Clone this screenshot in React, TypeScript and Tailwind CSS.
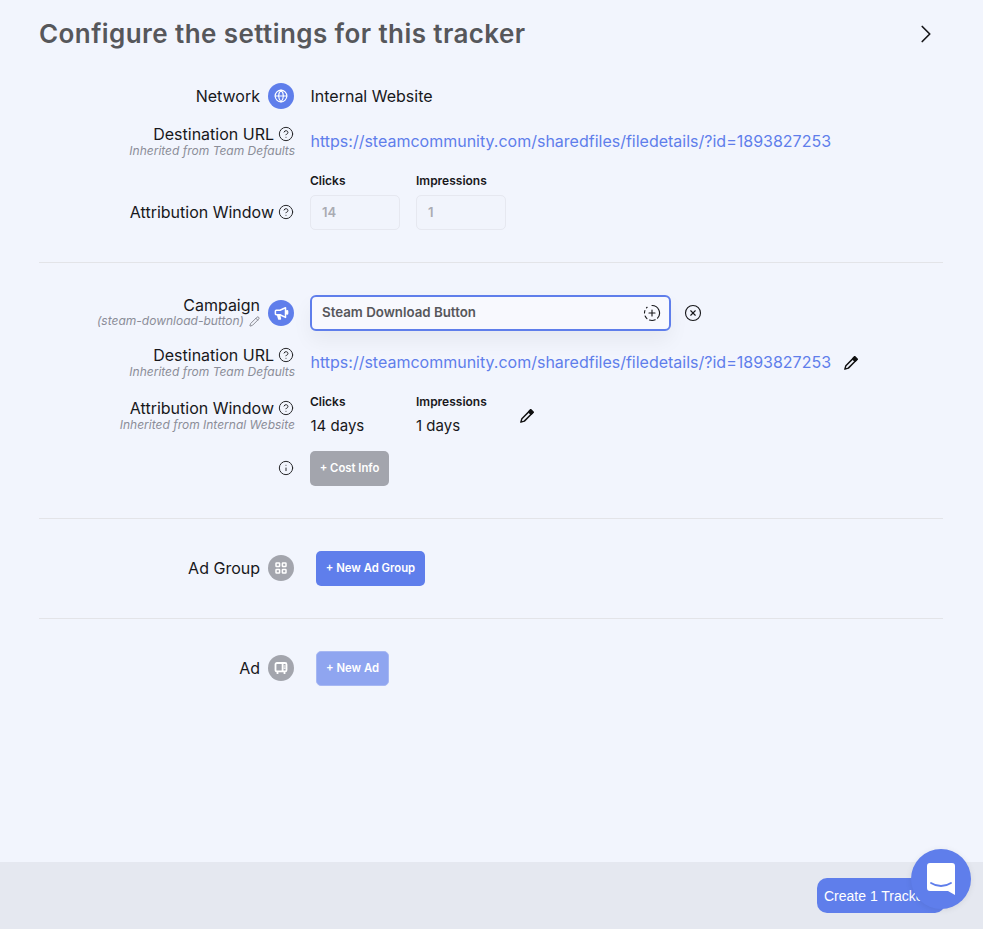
import React from "react";
import { ChevronRight, Globe, CircleHelp, Info, CircleX, CircleFadingPlus, Pencil } from "lucide-react";

const URL_TEXT = "https://steamcommunity.com/sharedfiles/filedetails/?id=1893827253";

function Help() {
  return <CircleHelp size={16} strokeWidth={1.5} className="ml-[4px] text-[#27272a] shrink-0" />;
}

function Sub({ children }: { children: React.ReactNode }) {
  return <div className="text-[12px] leading-[14px] italic text-[#8b8d98] whitespace-nowrap mr-[-1px]">{children}</div>;
}

function Badge({ active, children }: { active?: boolean; children: React.ReactNode }) {
  return (
    <div className={"w-[26px] h-[26px] rounded-full flex items-center justify-center ml-2 shrink-0 text-white " + (active ? "bg-[#5f7eeb]" : "bg-[#a3a5ad]")}>
      {children}
    </div>
  );
}

function MegaphoneIcon() {
  return (
    <svg width="15" height="15" viewBox="0 0 15 15" fill="none" stroke="#fff" strokeWidth="1.5" strokeLinejoin="round">
      <path d="M11.5 1.8 L6 4.2 H2.2 a.8.8 0 0 0-.8.8 V8 a.8.8 0 0 0 .8.8 H6 l5.5 2.6z" />
      <path d="M3.6 9 l1.2 4 h1.6 L5.6 9z" fill="#fff" />
      <rect x="12.6" y="4.8" width="1" height="3.2" rx="0.5" />
    </svg>
  );
}

function GridIcon() {
  return (
    <svg width="12" height="12" viewBox="0 0 12 12" fill="none" stroke="#fff" strokeWidth="1.5">
      <rect x="1" y="1" width="3.6" height="3.6" rx="0.6" />
      <rect x="7.4" y="1" width="3.6" height="3.6" rx="0.6" />
      <rect x="1" y="7.4" width="3.6" height="3.6" rx="0.6" />
      <rect x="7.4" y="7.4" width="3.6" height="3.6" rx="0.6" />
    </svg>
  );
}

function AdIcon() {
  return (
    <svg width="14" height="14" viewBox="0 0 14 14" fill="none" stroke="#fff" strokeWidth="1.8">
      <rect x="1.5" y="2" width="11" height="8.4" rx="1.4" />
      <path d="M8.6 2v8.4M3.5 10.4v2.6M10.5 10.4v2.6" />
      <path d="M9.6 5h2M9.6 7.2h2" strokeWidth="1.2" />
    </svg>
  );
}

function EditIcon({ className }: { className: string }) {
  return (
    <svg className={className} width="16" height="16" viewBox="0 0 24 24" fill="none" stroke="#111" strokeWidth="2.2" strokeLinejoin="round">
      <path d="M17.5 2.8 21.2 6.5 8 19.7 2.8 21.2 4.3 16z" />
      <path d="M14.5 5.8 18.2 9.5" />
      <path d="M17.5 2.8 21.2 6.5 18.7 9 15 5.3z" fill="#111" />
    </svg>
  );
}

function Chat() {
  return (
    <div className="absolute left-[911px] top-[849px] w-[60px] h-[60px] rounded-full bg-[#5f7eeb] flex items-center justify-center shadow-[0_1px_6px_rgba(0,0,0,0.08)]">
      <svg width="28" height="32" viewBox="0 0 28 32">
        <path d="M3 0h22a3 3 0 0 1 3 3v29l-7-4H3a3 3 0 0 1-3-3V3a3 3 0 0 1 3-3z" fill="#fff" />
        <path d="M4 20c6 4 14 4 20 0" fill="none" stroke="#5f7eeb" strokeWidth="1.8" strokeLinecap="round" />
      </svg>
    </div>
  );
}

function Divider({ className }: { className: string }) {
  return <div className={"h-px bg-[#e3e4e8] " + className} />;
}

export default function App() {
  return (
    <div className="relative w-[983px] h-[929px] overflow-hidden bg-[#f2f5fd] text-[#18181b] flex flex-col" style={{ fontFamily: "Inter, sans-serif" }}>
      <main className="flex-1 pl-[39px] pr-[40px]">
        <header className="h-[67px] flex items-center justify-between">
          <h1 className="text-[26px] leading-[32px] font-semibold text-[#56575b] tracking-[0.42px]">Configure the settings for this tracker</h1>
          <ChevronRight size={30} strokeWidth={1.4} className="text-[#18181b] mr-[2px]" />
        </header>

        <div className="mt-[16px] flex items-center h-[26px]">
          <div className="w-[255px] flex items-center justify-end text-[16px]">
            Network
            <Badge active><Globe size={14} strokeWidth={2} /></Badge>
          </div>
          <div className="ml-[16.5px] text-[16px]">Internal Website</div>
        </div>

        <div className="mt-[15px] flex h-[34px]">
          <div className="w-[255px] flex flex-col items-end">
            <div className="flex items-center h-[20px] text-[16px]">Destination URL<Help /></div>
            <Sub>Inherited from Team Defaults</Sub>
          </div>
          <a className="ml-[16.5px] mt-[7px] h-[20px] text-[16px] leading-[20px] text-[#5f7eeb] whitespace-nowrap">{URL_TEXT}</a>
        </div>

        <div className="mt-[15px] flex h-[55px]">
          <div className="w-[255px] flex items-end justify-end pb-[6px] text-[16px]">
            <div className="flex items-center h-[20px]">Attribution Window<Help /></div>
          </div>
          <div className="ml-4 flex gap-4">
            {["Clicks|14", "Impressions|1"].map((s) => (
              <div key={s}>
                <div className="text-[12px] leading-[15px] font-semibold mb-[7px]">{s.split("|")[0]}</div>
                <div className="w-[90px] h-[35px] rounded-[5px] border border-[#e6e8f0] bg-[#f1f4fc] px-[11px] flex items-center text-[13px] font-semibold text-[#a9abb3]">{s.split("|")[1]}</div>
              </div>
            ))}
          </div>
        </div>

        <Divider className="mt-[34px]" />

        <div className="mt-[32px] flex items-center h-[36px]">
          <div className="w-[255px] flex items-center justify-end">
            <div className="flex flex-col items-end mb-[3px]">
              <div className="text-[16px] leading-[19px]">Campaign</div>
              <div className="flex items-center gap-[5px] text-[12px] leading-[12px] italic text-[#8b8d98]">
                (steam-download-button)
                <Pencil size={11} strokeWidth={1.8} className="text-[#75767e]" />
              </div>
            </div>
            <Badge active><MegaphoneIcon /></Badge>
          </div>
          <div className="ml-4 relative w-[361px] h-[36px] rounded-[6px] border-2 border-[#5f7eeb] bg-[#f8f9fe] pl-[10px] pr-[8px] flex items-center justify-between shadow-[0_10px_20px_rgba(0,0,0,0.05)]">
            <span className="text-[13.3px] font-semibold text-[#56575b]">Steam Download Button</span>
            <CircleFadingPlus size={18} strokeWidth={1.5} className="text-[#18181b]" />
          </div>
          <CircleX size={18} strokeWidth={1.5} className="ml-[13px] text-[#18181b]" />
        </div>

        <div className="mt-[14px] flex h-[34px]">
          <div className="w-[255px] flex flex-col items-end">
            <div className="flex items-center h-[20px] text-[16px]">Destination URL<Help /></div>
            <Sub>Inherited from Team Defaults</Sub>
          </div>
          <a className="ml-[16.5px] mt-[7px] h-[20px] text-[16px] leading-[20px] text-[#5f7eeb] whitespace-nowrap">{URL_TEXT}</a>
          <EditIcon className="ml-[12px] mt-[10px]" />
        </div>

        <div className="mt-[19px] flex h-[40px]">
          <div className="w-[255px] flex flex-col items-end">
            <div className="flex items-center h-[20px] text-[16px]">Attribution Window<Help /></div>
            <Sub>Inherited from Internal Website</Sub>
          </div>
          <div className="ml-4 w-[106px] -mt-[4px]">
            <div className="text-[12px] leading-[15px] font-semibold mb-[8px]">Clicks</div>
            <div className="ml-[0.5px] text-[15px] leading-[18px]">14 days</div>
          </div>
          <div className="w-[103px] -mt-[4px]">
            <div className="text-[12px] leading-[15px] font-semibold mb-[8px]">Impressions</div>
            <div className="text-[15px] leading-[18px]">1 days</div>
          </div>
          <EditIcon className="mt-[10px]" />
        </div>

        <div className="mt-[13px] flex items-center h-[35px]">
          <div className="w-[255px] flex justify-end mb-[1px]">
            <Info size={16} strokeWidth={1.5} className="text-[#27272a]" />
          </div>
          <button className="ml-4 h-[35px] w-[79px] rounded-[5px] bg-[#a3a5ad] text-white text-[11.3px] font-semibold whitespace-nowrap">+ Cost Info</button>
        </div>

        <Divider className="mt-[32px]" />

        <div className="mt-[32px] flex items-center h-[35px]">
          <div className="w-[255px] flex items-center justify-end text-[16px] mb-[1px]">
            Ad Group
            <Badge><GridIcon /></Badge>
          </div>
          <button className="ml-[22px] h-[35px] w-[109px] rounded-[5px] bg-[#5f7eeb] text-white text-[11.3px] font-semibold whitespace-nowrap">+ New Ad Group</button>
        </div>

        <Divider className="mt-[32px]" />

        <div className="mt-[32px] flex items-center h-[35px]">
          <div className="w-[255px] flex items-center justify-end text-[16px] mb-[1px]">
            Ad
            <Badge><AdIcon /></Badge>
          </div>
          <button className="ml-[22px] h-[35px] w-[73px] rounded-[5px] border border-[#a7b8f3] bg-[#8fa5f0] text-white text-[11.3px] font-semibold whitespace-nowrap">+ New Ad</button>
        </div>
      </main>

      <footer className="h-[67px] bg-[#e5e8f0] flex justify-end items-start pt-[16px] pr-[38px]">
        <button className="h-[35px] w-[128px] rounded-[10px] bg-[#5f7eeb] text-white text-[14px] text-left pl-[7px] pt-[1px] whitespace-nowrap" style={{ fontFamily: '"Liberation Sans", sans-serif' }}>Create 1 Tracker</button>
      </footer>
      <Chat />
    </div>
  );
}
